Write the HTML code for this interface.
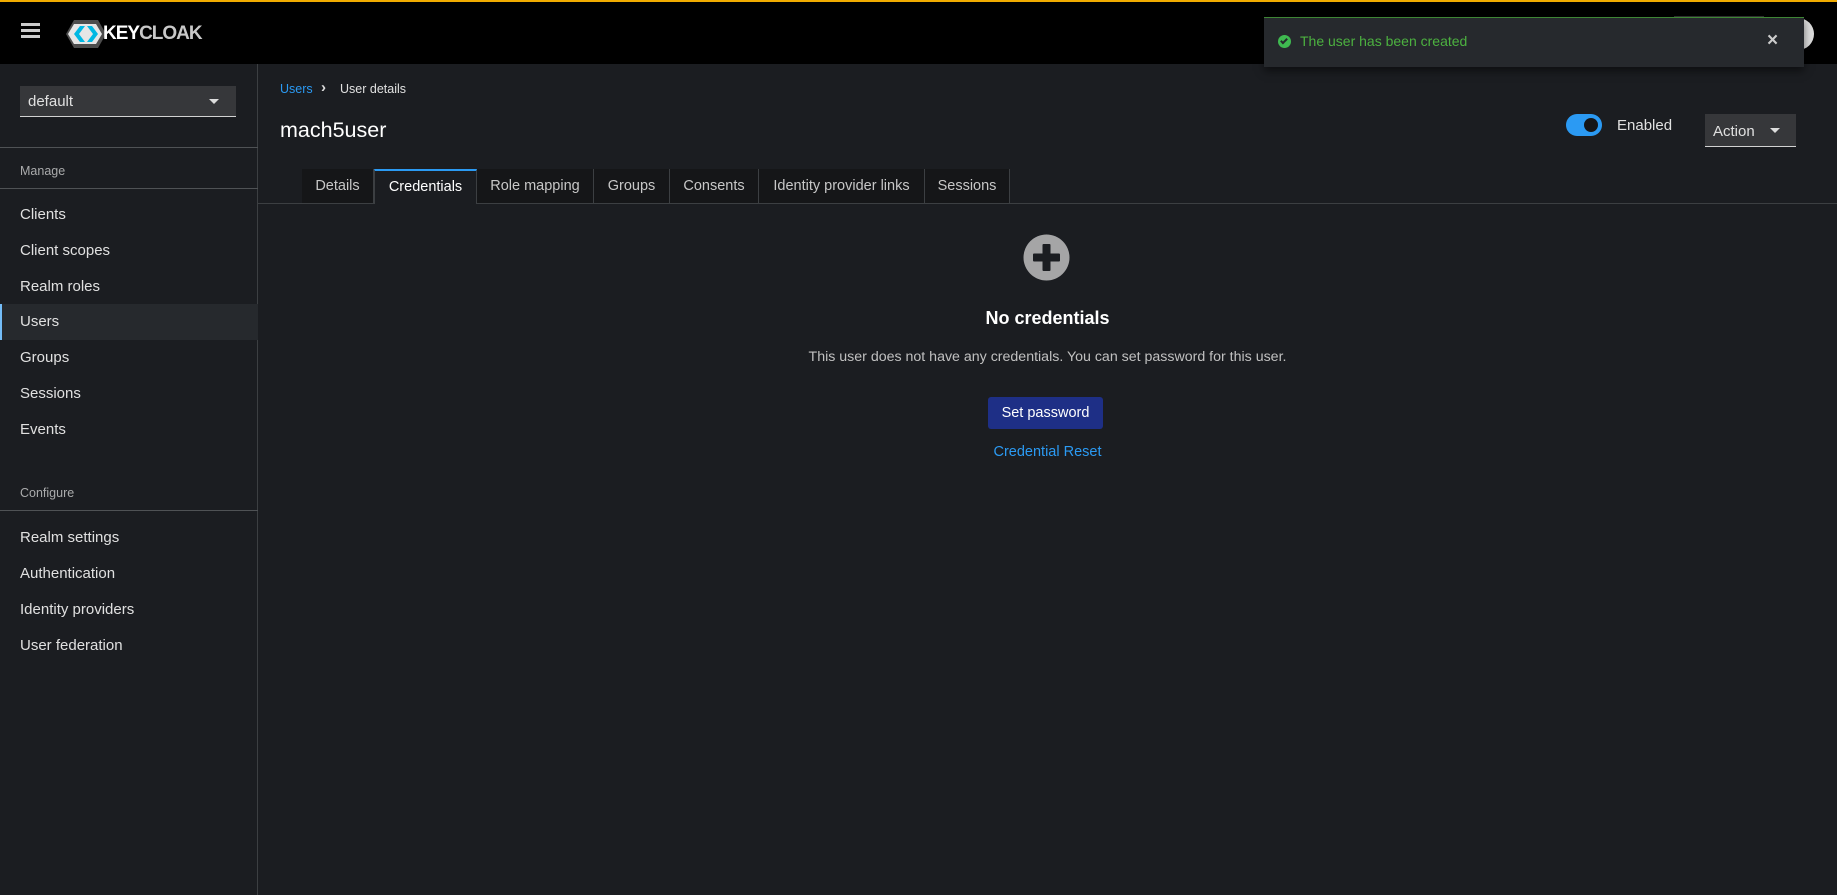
<!DOCTYPE html>
<html><head><meta charset="utf-8"><style>
*{box-sizing:border-box;margin:0;padding:0}
body{width:1837px;height:895px;overflow:hidden;background:#1b1d21;font-family:"Liberation Sans",sans-serif;color:#e0e0e0;position:relative}
.hdr{position:absolute;left:0;top:0;width:1837px;height:64px;background:#000;border-top:2px solid #f0ab00}
.side{position:absolute;left:0;top:64px;width:258px;height:831px;background:#1b1d21;border-right:1px solid #3c3f42}
.a{position:absolute}
.nav{position:absolute;left:20px;font-size:15px;color:#e0e0e0}
.sec{position:absolute;left:20px;font-size:12.5px;color:#aaabac}
.line{position:absolute;left:0;width:258px;height:1px;background:#4f5255}
.tab{position:absolute;top:169px;height:34px;background:#151618;border-right:1px solid #3c3f42;font-size:14.5px;color:#c7c7c7;text-align:center;line-height:34px}
</style></head><body>
<div class="hdr">
 <div class="a" style="left:21px;top:21px;width:19px;height:3px;background:#ccc;box-shadow:0 6px 0 #ccc,0 12px 0 #ccc"></div>
 <svg class="a" style="left:66px;top:17px" width="40" height="30" viewBox="0 0 40 30"><polygon points="8,1 32,1 40,15 32,29 8,29 0,15" fill="#4d4d4d"/><polygon points="2,15 8,5 30,5 36,15 30,25 8,25" fill="#e6e6e6"/><polygon points="14,7 19,7 13,15 19,23 14,23 8,15" fill="#00b8e3"/><polygon points="21,7 26,7 32,15 26,23 21,23 27,15" fill="#00b8e3"/></svg>
 <div class="a" style="left:103px;top:21px;font-size:19px;font-weight:bold;letter-spacing:-1px;color:#fff">KEY<span style="color:#c8c8c8">CLOAK</span></div>
 <div class="a" style="left:1674px;top:14px;width:90px;height:34px;background:#222;border:1px solid #333"></div>
 <div class="a" style="left:1782px;top:16px;width:32px;height:32px;border-radius:50%;background:#ddd"></div>
</div>
<div class="side">
 <div class="a" style="left:20px;top:22px;width:216px;height:31px;background:#36373a;border-bottom:1px solid #d2d2d2;font-size:15px;color:#e0e0e0;padding:7px 8px">default</div>
 <div class="a" style="left:209px;top:35px;width:0;height:0;border-left:5px solid transparent;border-right:5px solid transparent;border-top:5px solid #ddd"></div>
</div>
<div class="line" style="top:147px"></div>
<div class="sec" style="top:164px">Manage</div>
<div class="line" style="top:188px"></div>
<div class="a" style="left:0;top:304px;width:258px;height:36px;background:#26292d;border-left:2px solid #73bcf7"></div>
<div class="nav" style="top:206px">Clients</div>
<div class="nav" style="top:242px">Client scopes</div>
<div class="nav" style="top:278px">Realm roles</div>
<div class="nav" style="top:313px">Users</div>
<div class="nav" style="top:349px">Groups</div>
<div class="nav" style="top:385px">Sessions</div>
<div class="nav" style="top:421px">Events</div>
<div class="sec" style="top:486px">Configure</div>
<div class="line" style="top:510px"></div>
<div class="nav" style="top:529px">Realm settings</div>
<div class="nav" style="top:565px">Authentication</div>
<div class="nav" style="top:601px">Identity providers</div>
<div class="nav" style="top:637px">User federation</div>

<div class="a" style="left:280px;top:82px;font-size:12.5px;color:#2b9af3">Users</div>
<div class="a" style="left:321px;top:79px;font-size:15px;color:#ddd;font-weight:bold">›</div>
<div class="a" style="left:340px;top:82px;font-size:12.5px;color:#e0e0e0">User details</div>
<div class="a" style="left:280px;top:118px;font-size:21.5px;color:#fff">mach5user</div>
<div class="a" style="left:1566px;top:114px;width:36px;height:22px;border-radius:11px;background:#2b9af3"></div>
<div class="a" style="left:1584px;top:118px;width:14px;height:14px;border-radius:50%;background:#151618"></div>
<div class="a" style="left:1617px;top:117px;font-size:15px;color:#e0e0e0">Enabled</div>
<div class="a" style="left:1705px;top:114px;width:91px;height:33px;background:#36373a;border-bottom:1px solid #d2d2d2;font-size:15px;padding:9px 8px;color:#e0e0e0">Action</div>
<div class="a" style="left:1770px;top:128px;border-left:5px solid transparent;border-right:5px solid transparent;border-top:5px solid #ddd"></div>

<div class="a" style="left:258px;top:203px;width:1579px;height:1px;background:#3c3f42"></div>
<div class="tab" style="left:302px;width:72px">Details</div>
<div class="tab" style="left:374px;width:103px;background:#1b1d21;border-top:2px solid #2b9af3;border-left:1px solid #3c3f42;height:35px;color:#fff;line-height:32px">Credentials</div>
<div class="tab" style="left:477px;width:117px">Role mapping</div>
<div class="tab" style="left:594px;width:76px">Groups</div>
<div class="tab" style="left:670px;width:89px">Consents</div>
<div class="tab" style="left:759px;width:166px">Identity provider links</div>
<div class="tab" style="left:925px;width:85px">Sessions</div>

<svg class="a" style="left:1023px;top:234px" width="47" height="47" viewBox="0 0 47 47"><circle cx="23.5" cy="23.5" r="23" fill="#a5a5a6"/><rect x="19.5" y="10" width="8" height="27" rx="1" fill="#1b1d21"/><rect x="10" y="19.5" width="27" height="8" rx="1" fill="#1b1d21"/></svg>
<div class="a" style="left:258px;width:1579px;top:308px;text-align:center;font-size:18px;font-weight:bold;color:#fff">No credentials</div>
<div class="a" style="left:258px;width:1579px;top:349px;text-align:center;font-size:14.2px;color:#c0c0c0">This user does not have any credentials. You can set password for this user.</div>
<div class="a" style="left:988px;top:397px;width:115px;height:32px;background:#1e2f86;border-radius:3px;text-align:center;line-height:32px;font-size:14.5px;color:#fff">Set password</div>
<div class="a" style="left:258px;width:1579px;top:444px;text-align:center;font-size:14.5px;color:#2b9af3">Credential Reset</div>

<div class="a" style="left:1264px;top:17px;width:540px;height:50px;background:#26292d;border-top:1px solid #3e8635;box-shadow:0 4px 8px rgba(0,0,0,.5)"></div>
<div class="a" style="left:1278px;top:35px;width:13px;height:13px;border-radius:50%;background:#3fb950"></div>
<div class="a" style="left:1282px;top:37px;width:4px;height:7px;border-right:2px solid #26292d;border-bottom:2px solid #26292d;transform:rotate(45deg)"></div>
<div class="a" style="left:1300px;top:33px;font-size:14px;color:#4cb140">The user has been created</div>
<div class="a" style="left:1767px;top:30px;font-size:19px;color:#ccc;font-weight:bold">×</div>
</body></html>
